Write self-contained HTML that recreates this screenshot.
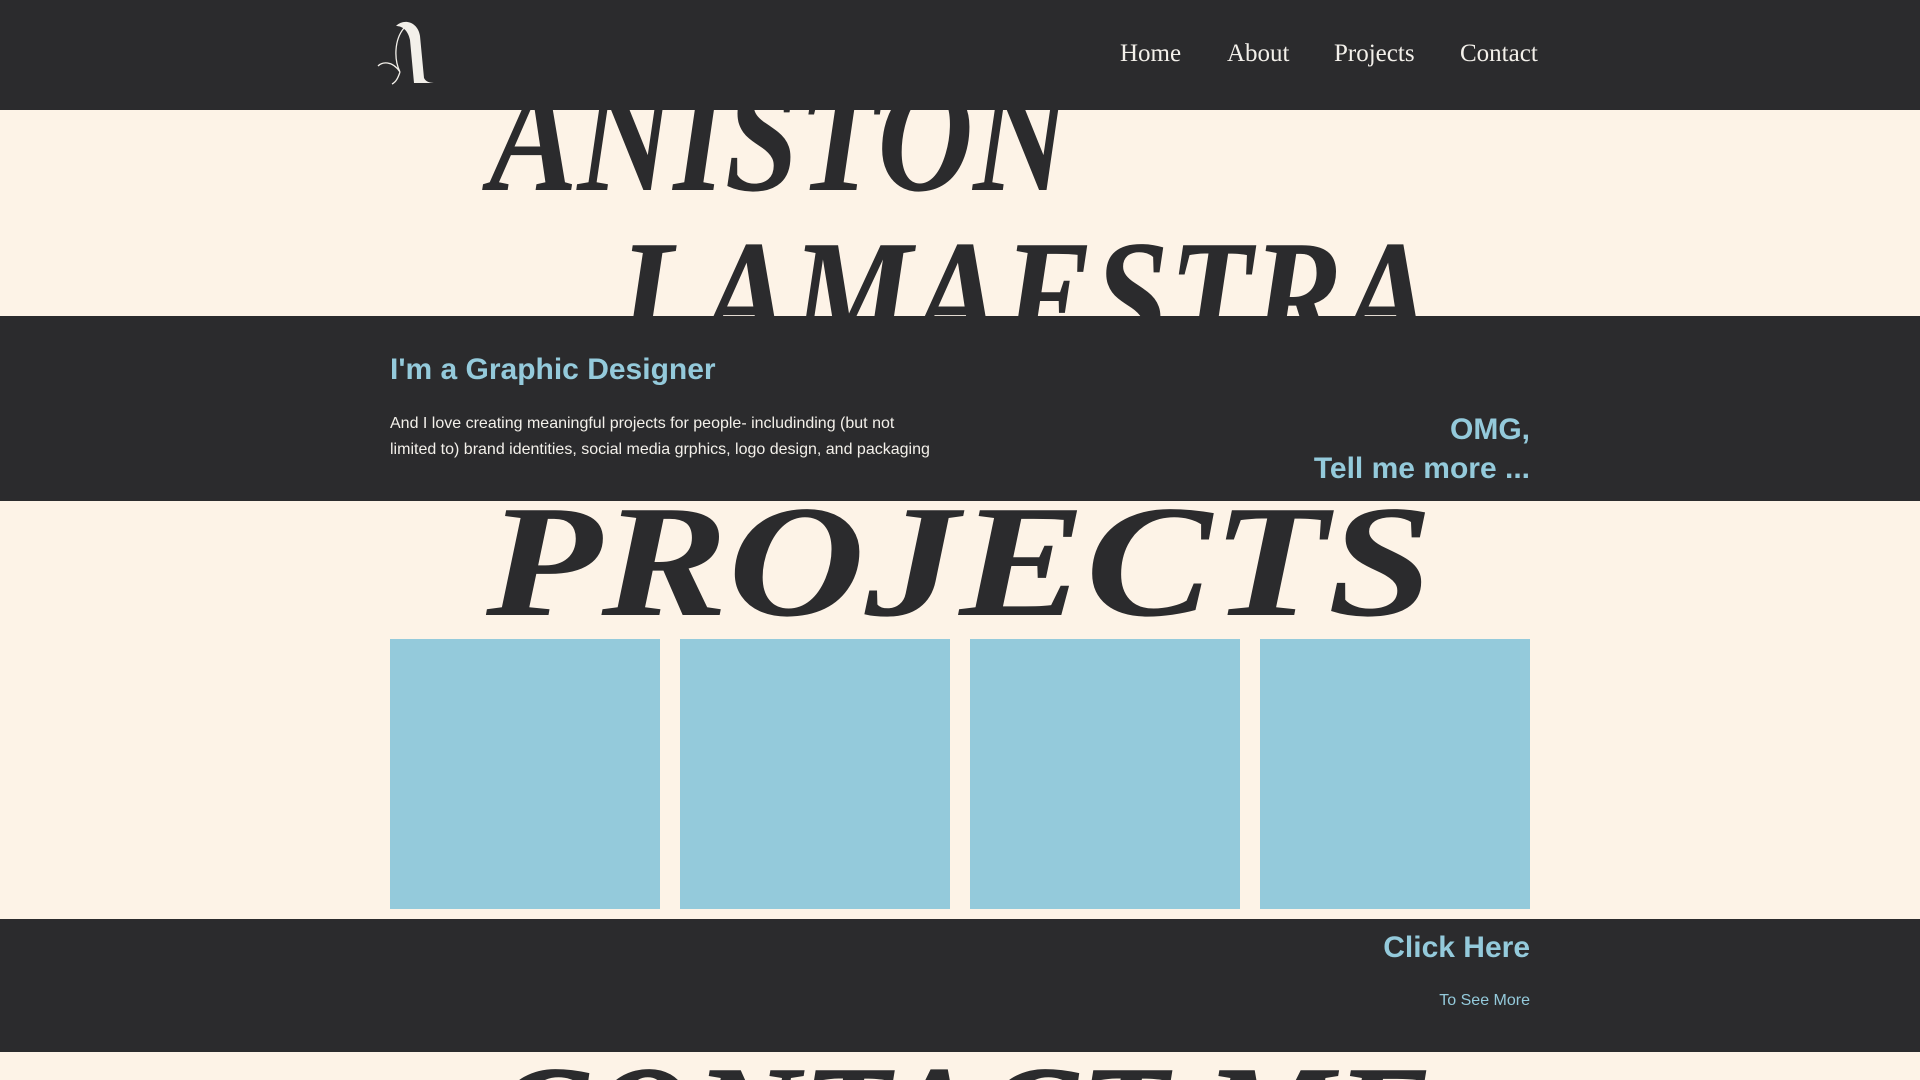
<!DOCTYPE html>
<html><head><meta charset="utf-8"><style>
*{margin:0;padding:0;box-sizing:border-box}
html,body{width:1920px;height:1080px;overflow:hidden}
body{background:#fdf3e7;font-family:"Liberation Sans",sans-serif;position:relative}
.dark{position:absolute;left:0;width:1920px;background:#2b2b2d}
.abs{position:absolute}
nav a{position:absolute;top:40px;font-family:"Liberation Serif",serif;font-size:25px;color:#f3f0ea;text-decoration:none}
.blue{color:#94cadb;font-weight:bold}
.box{position:absolute;top:639px;width:270px;height:270px;background:#94cadb}
svg.big{position:absolute;left:0;top:0}
</style></head><body>
<svg class="big" width="1920" height="1080">
<g font-family="Liberation Serif" font-style="italic" font-weight="bold" fill="#2b2b2d" font-size="160">
<text x="489" y="190" textLength="580" lengthAdjust="spacingAndGlyphs">ANISTON</text>
<text x="618" y="350" textLength="815" lengthAdjust="spacingAndGlyphs">LAMAESTRA</text>
<text x="486" y="615" textLength="947" lengthAdjust="spacingAndGlyphs">PROJECTS</text>
<text x="490" y="1175" textLength="943" lengthAdjust="spacingAndGlyphs">CONTACT ME</text>
</g></svg>
<div class="dark" style="top:0;height:110px"></div>
<div class="dark" style="top:316px;height:185px"></div>
<div class="dark" style="top:919px;height:133px"></div>
<svg class="abs" style="left:374px;top:20px" width="72" height="66" viewBox="0 0 72 66">
<path d="M22 6 C30 -2 44 2 46 16 L50 58 C52 62 56 63 62 63 L40 63 L36 20 C34 10 28 6 22 6Z" fill="#f3f0ea"/>
<path d="M30 8 C20 20 20 40 26 52 C18 40 8 42 4 46 M26 52 C24 58 22 62 18 64" stroke="#f3f0ea" stroke-width="1.3" fill="none"/>
</svg>
<nav><a style="left:1120px">Home</a><a style="left:1227px">About</a><a style="left:1334px">Projects</a><a style="left:1460px">Contact</a></nav>
<div class="abs blue" style="left:390px;top:353px;font-size:30px">I'm a Graphic Designer</div>
<div class="abs" style="left:390px;top:411px;font-size:16px;line-height:26px;color:#f3f0ea;width:548px">And I love creating meaningful projects for people- includinding (but not limited to) brand identities, social media grphics, logo design, and packaging</div>
<div class="abs blue" style="right:390px;top:410px;font-size:30px;line-height:39px;text-align:right">OMG,<br>Tell me more ...</div>
<div class="box" style="left:390px"></div><div class="box" style="left:680px"></div><div class="box" style="left:970px"></div><div class="box" style="left:1260px"></div>
<div class="abs blue" style="right:390px;top:931px;font-size:30px">Click Here</div>
<div class="abs" style="right:390px;top:992px;font-size:16px;color:#94cadb">To See More</div>
</body></html>
